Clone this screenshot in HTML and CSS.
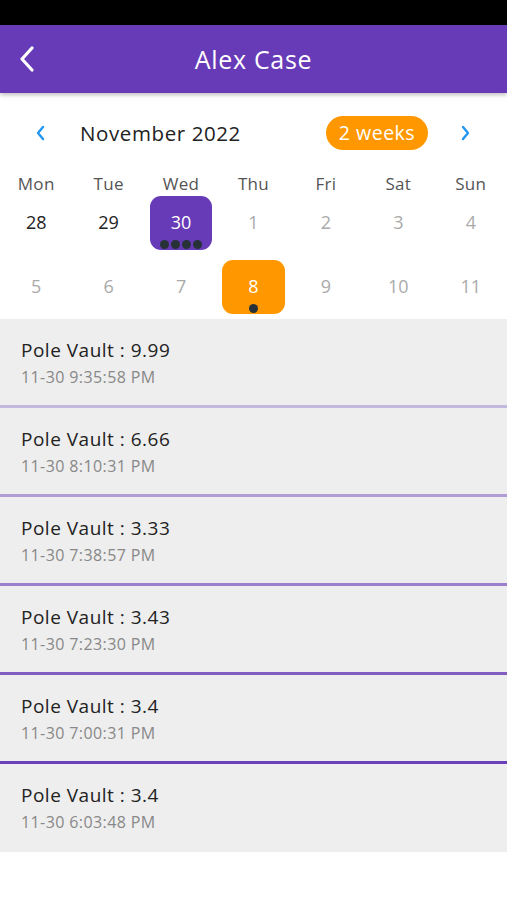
FILE: index.html
```html
<!DOCTYPE html>
<html>

<head>
	<link rel="stylesheet" href="styles.css">
</head>

<body>
	<div class="status-bar"></div>

	<div class="app-bar">
		<svg class="back" width="16" height="26" viewBox="0 0 16 26">
			<path d="M13 2 L3 13 L13 24" fill="none" stroke="#fff" stroke-width="3.2" stroke-linecap="round" stroke-linejoin="round" />
		</svg>
		<div class="title">Alex Case</div>
	</div>

	<div class="calendar">
		<div class="month-row">
			<svg class="nav" width="10" height="16" viewBox="0 0 10 16">
				<path d="M8 2 L3 8 L8 14" fill="none" stroke="#2196f3" stroke-width="2.4" stroke-linecap="round" stroke-linejoin="round" />
			</svg>
			<div class="month">November 2022</div>
			<div class="format">2 weeks</div>
			<svg class="nav" width="10" height="16" viewBox="0 0 10 16">
				<path d="M2 2 L7 8 L2 14" fill="none" stroke="#2196f3" stroke-width="2.4" stroke-linecap="round" stroke-linejoin="round" />
			</svg>
		</div>

		<div class="grid week-days">
			<div>Mon</div>
			<div>Tue</div>
			<div>Wed</div>
			<div>Thu</div>
			<div>Fri</div>
			<div>Sat</div>
			<div>Sun</div>
		</div>

		<div class="grid days">
			<div class="day"><span class="num">28</span></div>
			<div class="day"><span class="num">29</span></div>
			<div class="day selected"><span class="num">30</span>
				<div class="markers"><i></i><i></i><i></i><i></i></div>
			</div>
			<div class="day other"><span class="num">1</span></div>
			<div class="day other"><span class="num">2</span></div>
			<div class="day other"><span class="num">3</span></div>
			<div class="day other"><span class="num">4</span></div>

			<div class="day other"><span class="num">5</span></div>
			<div class="day other"><span class="num">6</span></div>
			<div class="day other"><span class="num">7</span></div>
			<div class="day today"><span class="num">8</span>
				<div class="markers"><i></i></div>
			</div>
			<div class="day other"><span class="num">9</span></div>
			<div class="day other"><span class="num">10</span></div>
			<div class="day other"><span class="num">11</span></div>
		</div>
	</div>

	<div class="events">
		<div class="event line-1">
			<div class="event-title">Pole Vault : 9.99</div>
			<div class="event-time">11-30 9:35:58 PM</div>
		</div>
		<div class="event line-2">
			<div class="event-title">Pole Vault : 6.66</div>
			<div class="event-time">11-30 8:10:31 PM</div>
		</div>
		<div class="event line-3">
			<div class="event-title">Pole Vault : 3.33</div>
			<div class="event-time">11-30 7:38:57 PM</div>
		</div>
		<div class="event line-4">
			<div class="event-title">Pole Vault : 3.43</div>
			<div class="event-time">11-30 7:23:30 PM</div>
		</div>
		<div class="event line-5">
			<div class="event-title">Pole Vault : 3.4</div>
			<div class="event-time">11-30 7:00:31 PM</div>
		</div>
		<div class="event">
			<div class="event-title">Pole Vault : 3.4</div>
			<div class="event-time">11-30 6:03:48 PM</div>
		</div>
	</div>
</body>

</html>
```

FILE: styles.css
```css
body {
	margin: 0;
	padding: 0;
	background: #fff;
	font-family: "Open Sans", Arial, sans-serif;
	color: #222;
}

.status-bar {
	height: 25px;
	background: #000;
}

.app-bar {
	position: relative;
	z-index: 1;
	height: 68px;
	background: #673ab7;
	display: flex;
	align-items: center;
	justify-content: center;
	box-shadow: 0 2px 4px rgba(0, 0, 0, 0.25);
}

.app-bar .back {
	position: absolute;
	left: 19px;
	top: 21px;
}

.app-bar .title {
	color: #fff;
	font-size: 25px;
	line-height: 30px;
	letter-spacing: 0.7px;
}

.calendar {
	padding-top: 23px;
}

.month-row {
	display: flex;
	align-items: center;
	height: 34px;
	padding: 0 36px 0 35px;
}

.month {
	flex: 1;
	margin-left: 35px;
	font-size: 20.5px;
	letter-spacing: 0.6px;
	color: #222;
}

.format {
	background: #ff9800;
	color: #fff;
	font-size: 19.5px;
	letter-spacing: 0.5px;
	line-height: 34px;
	width: 102px;
	text-align: center;
	border-radius: 17px;
	margin-right: 33px;
}

.grid {
	display: grid;
	grid-template-columns: repeat(7, 1fr);
}

.week-days {
	margin-top: 24px;
	height: 17px;
	line-height: 20px;
	text-align: center;
	font-size: 17px;
	letter-spacing: 0.3px;
	color: #555;
}

.days .day {
	height: 54px;
	margin: 5px 5px;
	border-radius: 11px;
	display: flex;
	align-items: center;
	justify-content: center;
	position: relative;
	font-size: 18px;
	color: #222;
}

.days .day .num {
	margin-top: -2px;
}

.days .other {
	color: #aaa;
}

.days .selected {
	background: #673ab7;
	color: #fff;
}

.days .today {
	background: #ff9800;
	color: #fff;
}

.markers {
	position: absolute;
	left: 0;
	right: 0;
	bottom: 1px;
	display: flex;
	justify-content: center;
	gap: 2px;
}

.markers i {
	width: 9px;
	height: 9px;
	border-radius: 50%;
	background: #263238;
}

.events {
	background: #eee;
}

.event {
	padding: 18px 21px 16px;
	border-bottom: 3px solid transparent;
}

.event:last-child {
	border-bottom: 0;
	padding-bottom: 18px;
}

.event.line-1 {
	border-color: rgba(103, 58, 183, 0.3);
}

.event.line-2 {
	border-color: rgba(103, 58, 183, 0.45);
}

.event.line-3 {
	border-color: rgba(103, 58, 183, 0.62);
}

.event.line-4 {
	border-color: rgba(103, 58, 183, 0.8);
}

.event.line-5 {
	border-color: rgba(103, 58, 183, 0.97);
}

.event-title {
	font-size: 19px;
	letter-spacing: 0.5px;
	line-height: 28px;
	margin-top: -1px;
	margin-bottom: 1px;
	color: #222;
}

.event-time {
	font-size: 16px;
	letter-spacing: 0.4px;
	line-height: 24px;
	color: #888;
}
```
